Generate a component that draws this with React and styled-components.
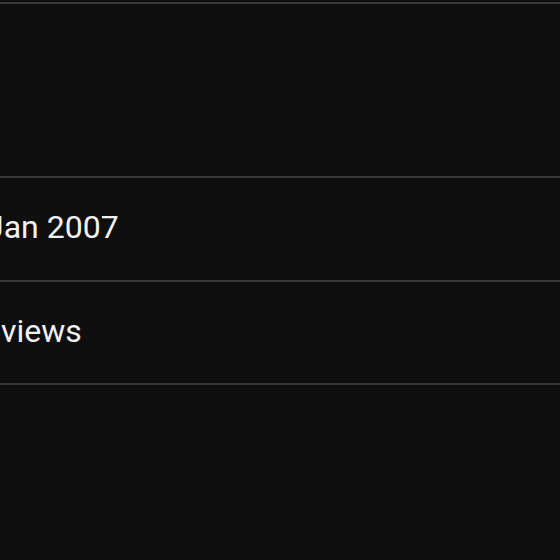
import * as React from "react"
import styled, { createGlobalStyle } from "styled-components"

const Global = createGlobalStyle`
  html, body {
    margin: 0;
    padding: 0;
    background: #0f0f0f;
    overflow: hidden;
  }
  body {
    font-family: Roboto, "Noto Sans", "Liberation Sans", sans-serif;
    color: #f1f1f1;
  }
`;

const Page = styled.div`
  width: 560px;
  height: 560px;
  overflow: hidden;
  padding-top: 2px;
  box-sizing: border-box;
`;

const Section = styled.div`
  border-top: 2px solid #383838;
  height: ${p => p.$height}px;
  box-sizing: content-box;
  display: flex;
  align-items: center;
  padding-bottom: ${p => (p.$height > 150 ? 0 : 4)}px;
`;

const Value = styled.div`
  font-size: 32px;
  line-height: 1;
  white-space: nowrap;
  margin-left: ${p => p.$offset || 0}px;
`;

const Count = styled.span`
  display: inline-block;
  width: ${p => p.$width}px;
  margin-left: -${p => p.$width}px;
  overflow: hidden;
  text-align: right;
  vertical-align: bottom;
`;

export default () => {
    return (
        <Page>
            <Global />
            <Section $height={172} />
            <Section $height={98}>
                <Value $offset={-14}>Jan 2007</Value>
            </Section>
            <Section $height={97}>
                <Value $offset={1}>
                    <Count $width={170}>12,483,907&nbsp;</Count>views
                </Value>
            </Section>
            <Section $height={175} />
        </Page>
    );
};
